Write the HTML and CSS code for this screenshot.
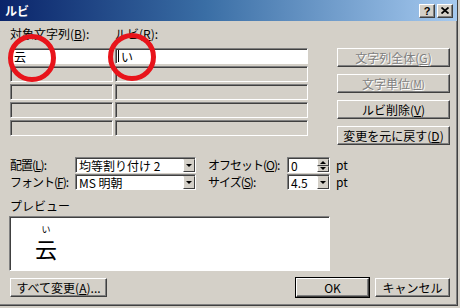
FILE: index.html
```html
<!DOCTYPE html>
<html lang="ja">
<head>
    <meta charset="UTF-8">
    <title>ルビ</title>
    <link rel="stylesheet" href="styles.css">
</head>
<body>
    <div class="window">
        <div class="titlebar">
            <span class="title">ルビ</span>
            <div class="caption-buttons">
                <div class="cap-btn help">?</div>
                <div class="cap-btn">
                    <svg width="8" height="7" viewBox="0 0 8 7">
                        <path d="M0.5 0.5 L7.5 6.5 M7.5 0.5 L0.5 6.5" stroke="#000" stroke-width="1.8"/>
                    </svg>
                </div>
            </div>
        </div>

        <div class="content">
            <div class="top">
                <div class="ruby-grid">
                    <div class="label">対象文字列(<u>B</u>):</div>
                    <div class="label">ルビ(<u>R</u>):</div>
                    <div class="cell active"><span class="cell-text">云</span></div>
                    <div class="cell active"><span class="caret"></span><span class="cell-text">い</span></div>
                    <div class="cell"></div>
                    <div class="cell"></div>
                    <div class="cell"></div>
                    <div class="cell"></div>
                    <div class="cell"></div>
                    <div class="cell"></div>
                    <div class="cell"></div>
                    <div class="cell"></div>
                </div>

                <div class="side-buttons">
                    <div class="btn disabled">文字列全体(<u>G</u>)</div>
                    <div class="btn disabled">文字単位<span class="small">(<u>M</u>)</span></div>
                    <div class="btn">ルビ削除(<u>V</u>)</div>
                    <div class="btn">変更を元に戻す(<u>D</u>)</div>
                </div>

                <!-- 赤丸の注記 -->
                <span class="mark mark-base"></span>
                <span class="mark mark-ruby"></span>
            </div>

            <div class="settings">
                <div class="label">配置(<u>L</u>):</div>
                <div class="combo wide">
                    <span class="combo-text">均等割り付け 2</span>
                    <span class="drop-btn"><span class="arrow"></span></span>
                </div>
                <div class="label second">オフセット(<u>O</u>):</div>
                <div class="combo narrow">
                    <span class="combo-text">0</span>
                    <span class="spin">
                        <span class="spin-btn"><span class="arrow up"></span></span>
                        <span class="spin-btn"><span class="arrow"></span></span>
                    </span>
                </div>
                <div class="unit">pt</div>

                <div class="label">フォント(<u>F</u>):</div>
                <div class="combo wide">
                    <span class="combo-text">MS 明朝</span>
                    <span class="drop-btn"><span class="arrow"></span></span>
                </div>
                <div class="label second">サイズ(<u>S</u>):</div>
                <div class="combo narrow">
                    <span class="combo-text">4.5</span>
                    <span class="drop-btn"><span class="arrow"></span></span>
                </div>
                <div class="unit">pt</div>
            </div>

            <div class="preview-label">プレビュー</div>
            <div class="preview">
                <div class="preview-ruby">
                    <span class="ruby-text">い</span>
                    <span class="ruby-base">云</span>
                </div>
            </div>

            <div class="footer">
                <div class="btn all-btn">すべて変更(<u>A</u>)...</div>
                <div class="footer-right">
                    <div class="btn default">OK</div>
                    <div class="btn">キャンセル</div>
                </div>
            </div>
        </div>
    </div>
</body>
</html>
```

FILE: styles.css
```css
body {
    margin: 0;
    background-color: #d4d0c8;
    font-family: "Noto Sans CJK JP", "Liberation Sans", sans-serif;
    font-size: 12px;
    color: #000;
}

u {
    text-decoration: underline;
    text-underline-offset: 1px;
}

.window {
    width: 457px;
    height: 305px;
    background-color: #d4d0c8;
    border-right: 1px solid #404040;
    border-bottom: 1px solid #404040;
    box-shadow: inset -1px -1px 0 #808080;
}

.titlebar {
    height: 21px;
    display: flex;
    align-items: center;
    justify-content: space-between;
    padding: 0 4px 0 5px;
    background: linear-gradient(to right, #0a246a, #3a6ea5 45%, #a6caf0);
}

.title {
    color: #fff;
    font-weight: bold;
    font-size: 12px;
    line-height: 14px;
}

.caption-buttons {
    display: flex;
    gap: 2px;
}

.cap-btn {
    width: 14px;
    height: 12px;
    display: flex;
    align-items: center;
    justify-content: center;
    background-color: #d4d0c8;
    border: 1px solid;
    border-color: #fff #404040 #404040 #fff;
    box-shadow: inset -1px -1px 0 #808080;
}

.cap-btn.help {
    font-family: "Liberation Sans", sans-serif;
    font-weight: bold;
    font-size: 11px;
    line-height: 12px;
}

.content {
    padding: 0 7px 0 10px;
}

.top {
    position: relative;
    display: flex;
    height: 124px;
}

.ruby-grid {
    display: grid;
    grid-template-columns: 103px 193px;
    grid-template-rows: 25px repeat(5, 16px);
    column-gap: 2px;
    row-gap: 2px;
}

.label {
    line-height: 14px;
    white-space: nowrap;
}

.ruby-grid .label {
    align-self: end;
    padding-bottom: 5px;
}

.cell {
    display: flex;
    align-items: center;
    padding-left: 2px;
    box-sizing: border-box;
    background-color: #d4d0c8;
    border: 1px solid;
    border-color: #808080 #fff #fff #808080;
    box-shadow: inset 1px 1px 0 #404040;
}

.cell.active {
    background-color: #fff;
}

.cell-text {
    font-size: 12px;
    line-height: 13px;
    margin-left: 1px;
}

.caret {
    width: 1px;
    height: 12px;
    background-color: #000;
    margin-right: 1px;
}

.side-buttons {
    display: flex;
    flex-direction: column;
    gap: 7px;
    margin-top: 27px;
    margin-left: 29px;
    width: 113px;
}

.btn {
    height: 19px;
    box-sizing: border-box;
    display: flex;
    align-items: center;
    justify-content: center;
    background-color: #d4d0c8;
    border: 1px solid;
    border-color: #fff #404040 #404040 #fff;
    box-shadow: inset -1px -1px 0 #808080;
    line-height: 14px;
    white-space: nowrap;
}

.btn.disabled {
    color: #808080;
    text-shadow: 1px 1px 0 #fff;
}

.small {
    font-size: 10px;
}

.mark {
    position: absolute;
    width: 48px;
    height: 48px;
    box-sizing: border-box;
    border: 5px solid #e8141b;
    border-radius: 50%;
}

.mark-base {
    left: -2px;
    top: 13px;
}

.mark-ruby {
    left: 98px;
    top: 12px;
}

.settings {
    display: grid;
    grid-template-columns: 65px 121px 91px 43px auto;
    grid-template-rows: 16px 16px;
    row-gap: 1px;
    margin-top: 12px;
    align-items: center;
}

.settings .label {
    letter-spacing: -1px;
}

.settings .second {
    padding-left: 12px;
}

.unit {
    padding-left: 6px;
    line-height: 14px;
}

.combo {
    height: 16px;
    box-sizing: border-box;
    display: flex;
    align-items: stretch;
    background-color: #fff;
    border: 1px solid;
    border-color: #808080 #fff #fff #808080;
    box-shadow: inset 1px 1px 0 #404040;
    padding: 1px 0 0 1px;
}

.combo-text {
    flex: 1;
    line-height: 14px;
    padding-left: 2px;
    white-space: nowrap;
}

.drop-btn,
.spin-btn {
    width: 12px;
    box-sizing: border-box;
    display: flex;
    align-items: center;
    justify-content: center;
    background-color: #d4d0c8;
    border: 1px solid;
    border-color: #d4d0c8 #404040 #404040 #fff;
}

.spin {
    display: flex;
    flex-direction: column;
}

.spin-btn {
    flex: 1;
}

.arrow {
    width: 0;
    height: 0;
    border-left: 3px solid transparent;
    border-right: 3px solid transparent;
    border-top: 3px solid #000;
}

.arrow.up {
    border-top: none;
    border-bottom: 3px solid #000;
}

.preview-label {
    margin-top: 9px;
    height: 17px;
    line-height: 14px;
}

.preview {
    width: 321px;
    height: 55px;
    margin-left: -1px;
    box-sizing: border-box;
    background-color: #fff;
    border: 1px solid;
    border-color: #808080 #fff #fff #808080;
    box-shadow: inset 1px 1px 0 #404040;
    padding: 2px 0 0 25px;
}

.preview-ruby {
    display: inline-flex;
    flex-direction: column;
    align-items: center;
    gap: 3px;
}

.ruby-text {
    font-size: 9px;
    line-height: 9px;
}

.ruby-base {
    font-size: 22px;
    line-height: 22px;
}

.footer {
    display: flex;
    justify-content: space-between;
    margin-top: 7px;
}

.all-btn {
    width: 97px;
}

.footer-right {
    display: flex;
    gap: 6px;
}

.footer-right .btn {
    width: 75px;
}

.btn.default {
    width: 73px;
    outline: 1px solid #000;
}
```
